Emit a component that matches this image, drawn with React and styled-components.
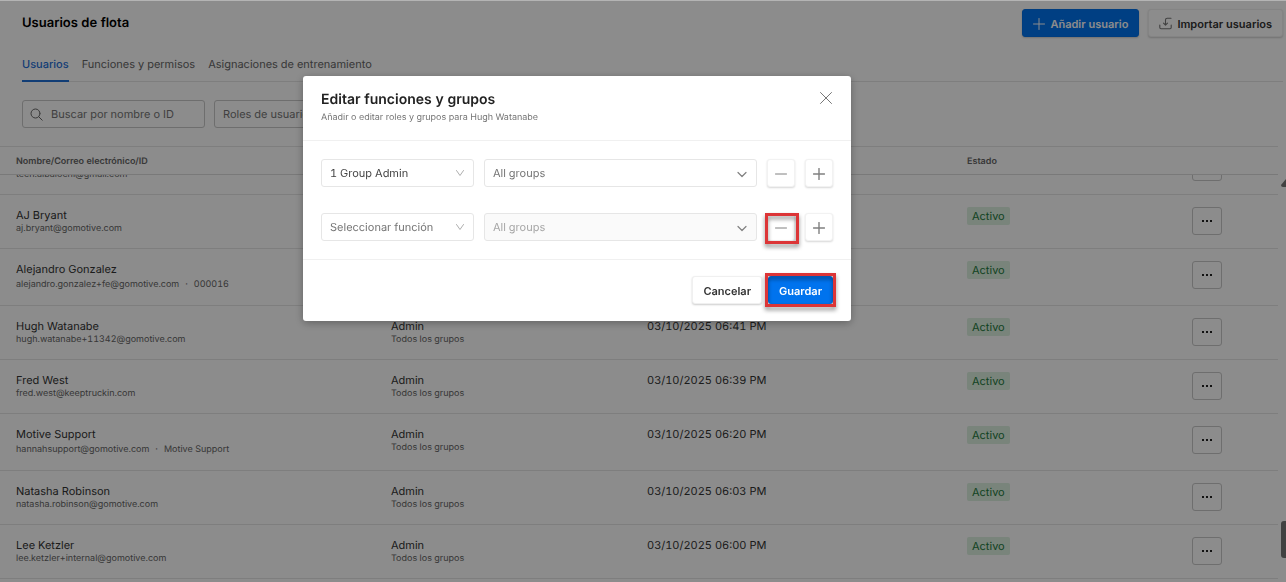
import React, { useLayoutEffect, useRef } from "react";
import styled, { createGlobalStyle, css } from "styled-components";

const GlobalStyle = createGlobalStyle`
  * {
    box-sizing: border-box;
  }

  body {
    margin: 0;
    background: #fff;
    color: #333;
    font-family: Inter, "Liberation Sans", sans-serif;
    font-size: 11px;
    font-variant-numeric: tabular-nums;
    text-rendering: geometricPrecision;
  }

  button,
  input,
  select {
    font-family: inherit;
    font-size: 11px;
    font-variant-numeric: inherit;
    text-rendering: inherit;
  }
`;

// Page
const Page = styled.div`
  display: flex;
  flex-direction: column;
  height: 100vh;
  overflow: hidden;
  border-top: 1px solid #b4b4b4;
`;

const Top = styled.header`
  display: flex;
  align-items: center;
  gap: 9px;
  padding: 8px 3px 0 22px;
`;

const PageTitle = styled.h1`
  flex: 1;
  margin: 0;
  color: #000;
  font-size: 13px;
  font-weight: 600;
`;

const Button = styled.button`
  display: inline-flex;
  align-items: center;
  justify-content: center;
  gap: 5px;
  height: 28px;
  padding: 1px 10px 0;
  border: 1px solid #f0f0f0;
  border-radius: 3px;
  background: #fff;
  color: #333;
  font-weight: 600;
  box-shadow: 0 1px 2px rgba(0, 0, 0, 0.2);
  cursor: pointer;

  ${({ $primary }) =>
    $primary &&
    css`
      border-color: #0070e8;
      background: #0073ee;
      color: #fff;
    `}
`;

const Tabs = styled.nav`
  display: flex;
  gap: 13px;
  margin: 16px 3px 0 22px;
  border-bottom: 1px solid #e6e6e6;
`;

const Tab = styled.a`
  margin-bottom: -1px;
  padding-bottom: 5px;
  border-bottom: 2px solid ${({ $active }) => ($active ? "#1f6fd6" : "transparent")};
  color: ${({ $active }) => ($active ? "#1f6fd6" : "#666")};
  font-weight: ${({ $active }) => ($active ? 500 : 400)};
  line-height: 22px;
  text-decoration: none;
`;

const Filters = styled.div`
  display: flex;
  gap: 9px;
  padding: 18px 22px;
`;

const SearchBox = styled.label`
  display: flex;
  align-items: center;
  gap: 8px;
  width: 183px;
  height: 28px;
  padding: 0 7px;
  border: 1px solid #c8c8c8;
  border-radius: 3px;
  color: #666;

  input {
    flex: 1;
    min-width: 0;
    padding: 0;
    border: 0;
    outline: 0;
    background: none;
  }

  input::placeholder {
    color: #757575;
  }
`;

// Users table
const TableArea = styled.div`
  display: flex;
  flex: 1;
  min-height: 0;
  margin-bottom: 3px;
`;

const TableScroll = styled.div`
  flex: 1;
  overflow: auto;
  border-top: 1px solid #e6e6e6;
  scrollbar-width: none;
`;

const Table = styled.table`
  width: 100%;
  border-spacing: 0;
  table-layout: fixed;
`;

const HeadCell = styled.th`
  position: sticky;
  top: 0;
  z-index: 1;
  width: ${({ $width }) => $width || "auto"};
  height: 28px;
  padding: 1px 0 0 16px;
  border-bottom: 1px solid #dcdcdc;
  background: #fff;
  color: #666;
  font-size: 9px;
  font-weight: 600;
  text-align: left;
`;

const Cell = styled.td`
  padding: 12px 0 13px 16px;
  border-bottom: 1px solid #e6e6e6;
  vertical-align: top;
`;

const Main = styled.div`
  min-height: 16px;
  color: #333;
  line-height: 16px;
`;

const Sub = styled.div`
  display: flex;
  gap: 6px;
  color: #666;
  font-size: 9px;
  line-height: ${({ $tall }) => ($tall ? 15 : 12)}px;
`;

const Status = styled.span`
  display: inline-block;
  padding: 0 5px;
  border-radius: 2px;
  background: #dcf0e0;
  color: #1e7a3c;
  line-height: 18px;
`;

const MoreButton = styled.button`
  display: flex;
  align-items: center;
  justify-content: center;
  width: 30px;
  height: 28px;
  padding: 0;
  border: 1px solid #c8c8c8;
  border-radius: 3px;
  background: #fff;
  color: #222;
`;

const ActionCell = styled(Cell)`
  padding-bottom: 0;
`;

const Rail = styled.div`
  display: flex;
  flex-direction: column;
  align-items: flex-end;
  justify-content: space-between;
  width: 8px;
  padding: 33px 0 21px;
`;

const Thumb = styled.div`
  width: 5px;
  height: 37px;
  border-radius: 3px 0 0 3px;
  background: #777;
`;

// Modal
const Overlay = styled.div`
  position: fixed;
  inset: 1px 0 0;
  z-index: 10;
  display: flex;
  align-items: flex-start;
  justify-content: center;
  padding: 75px 132px 0 0;
  background: rgba(0, 0, 0, 0.45);
`;

const Dialog = styled.section`
  width: 548px;
  max-width: 100%;
  border-radius: 3px;
  background: #fff;
  box-shadow: 0 2px 8px rgba(0, 0, 0, 0.3);
`;

const DialogHeader = styled.div`
  display: flex;
  align-items: flex-start;
  justify-content: space-between;
  padding: 14px 18px;
  border-bottom: 1px solid #f0f0f0;
`;

const DialogTitle = styled.h2`
  margin: 0;
  color: #222;
  font-size: 14px;
  font-weight: 600;
  line-height: 20px;
`;

const DialogText = styled.p`
  margin: 0;
  color: #757575;
  font-size: 9px;
  line-height: 16px;
`;

const CloseButton = styled.button`
  display: flex;
  padding: 1px 0;
  border: 0;
  background: none;
  color: #777;
`;

const DialogBody = styled.div`
  display: grid;
  gap: 26px;
  padding: 18px;
  border-bottom: 1px solid #f0f0f0;
`;

const RoleRow = styled.div`
  display: flex;
  gap: 10px;
`;

const SelectBox = styled.div`
  position: relative;
  flex: ${({ $width }) => ($width ? `0 0 ${$width}` : "1")};
  color: #999;

  select {
    width: 100%;
    height: 28px;
    padding: 0 24px 0 8px;
    appearance: none;
    border: 1px solid ${({ $strong }) => ($strong ? "#c8c8c8" : "#e6e6e6")};
    border-radius: 3px;
    background: #fff;
    color: ${({ $filled }) => ($filled ? "#444" : "#757575")};
    opacity: 1;
  }

  select:disabled {
    background: #fafafa;
    color: #a6a6a6;
  }

  svg {
    position: absolute;
    top: 9px;
    right: 9px;
    pointer-events: none;
  }
`;

const SquareButton = styled.button`
  display: flex;
  align-items: center;
  justify-content: center;
  width: 28px;
  height: 28px;
  padding: 1px 0 0;
  border: 1px solid #f2f2f2;
  border-radius: 3px;
  background: #fff;
  color: #808080;
  box-shadow: 0 1px 2px rgba(0, 0, 0, 0.16);
`;

const DialogFooter = styled.div`
  display: flex;
  justify-content: flex-end;
  gap: 6px;
  padding: 16px 18px 17px;
`;

const Marked = styled.div`
  position: relative;
  display: flex;

  ${({ $on }) =>
    $on &&
    css`
      &::after {
        content: "";
        position: absolute;
        inset: ${({ $inset }) => $inset};
        border: 3px solid #dc3537;
        filter: drop-shadow(0 3px 2px rgba(0, 0, 0, 0.45));
        pointer-events: none;
      }
    `}
`;

const Line = ({ size, d, width = 1, box = 12, color = "currentColor" }) => (
  <svg
    width={size}
    height={size}
    viewBox={`0 0 ${box} ${box}`}
    fill="none"
    stroke={color}
    strokeWidth={width}
    strokeLinecap="round"
    strokeLinejoin="round"
    aria-hidden="true"
  >
    <path d={d} />
  </svg>
);

const PlusIcon = ({ width }) => <Line size={12} width={width} d="M6 .5v11M.5 6h11" />;
const MinusIcon = () => <Line size={12} d="M.5 6h11" />;
const CloseIcon = () => <Line size={14} box={14} d="M1.5 1.5l11 11M12.5 1.5l-11 11" />;
const SearchIcon = () => <Line size={13} box={13} d="M10 5.5a4.5 4.5 0 1 1-9 0a4.5 4.5 0 0 1 9 0M8.8 8.8l3.4 3.4" />;
const ImportIcon = () => (
  <Line
    size={13}
    box={13}
    width={1.1}
    color="#777"
    d="M.8 8v2.6q0 1.2 1.2 1.2h9q1.2 0 1.2-1.2V8M12 1.2H8.2q-1.7 0-1.7 1.7v5M4.5 6.2l2 2 2-2"
  />
);
const ThinChevron = () => <Line size={10} box={10} width={0.8} d="M1.5 2.5L5 7.5l3.5-5" />;
const Chevron = () => <Line size={12} width={1.2} color="#808080" d="M2 4.5l4 4 4-4" />;

const users = [
  { email: "tech.albalochi@gmail.com" },
  { name: "AJ Bryant", email: "aj.bryant@gomotive.com", date: "03/10/2025 06:58 PM" },
  { name: "Alejandro Gonzalez", email: "alejandro.gonzalez+fe@gomotive.com", id: "000016", date: "03/10/2025 06:50 PM" },
  { name: "Hugh Watanabe", email: "hugh.watanabe+11342@gomotive.com", date: "03/10/2025 06:41 PM" },
  { name: "Fred West", email: "fred.west@keeptruckin.com", date: "03/10/2025 06:39 PM" },
  { name: "Motive Support", email: "hannahsupport@gomotive.com", id: "Motive Support", date: "03/10/2025 06:20 PM" },
  { name: "Natasha Robinson", email: "natasha.robinson@gomotive.com", date: "03/10/2025 06:03 PM" },
  { name: "Lee Ketzler", email: "lee.ketzler+internal@gomotive.com", date: "03/10/2025 06:00 PM" },
];

const UserRow = ({ user }) => (
  <tr>
    <Cell>
      <Main>{user.name}</Main>
      <Sub $tall={Boolean(user.id)}>
        <span>{user.email}</span>
        {user.id && (
          <>
            <span>·</span>
            <span>{user.id}</span>
          </>
        )}
      </Sub>
    </Cell>
    <Cell>
      {user.name && (
        <>
          <Main>Admin</Main>
          <Sub>Todos los grupos</Sub>
        </>
      )}
    </Cell>
    <Cell>
      <Main>{user.date}</Main>
    </Cell>
    <Cell>{user.name && <Status>Activo</Status>}</Cell>
    <ActionCell>
      <MoreButton type="button" aria-label={`Acciones para ${user.name || user.email}`}>
        <svg width="12" height="4" viewBox="0 0 12 4" fill="currentColor" aria-hidden="true">
          <rect x="1" y="1" width="2" height="2" />
          <rect x="5" y="1" width="2" height="2" />
          <rect x="9" y="1" width="2" height="2" />
        </svg>
      </MoreButton>
    </ActionCell>
  </tr>
);

const UsersTable = () => {
  const scroller = useRef(null);

  useLayoutEffect(() => {
    // Open the list a little past its first user
    scroller.current.scrollTop = 34;
  }, []);

  return (
    <TableArea>
      <TableScroll ref={scroller}>
        <Table>
          <thead>
            <tr>
              <HeadCell>Nombre/Correo electrónico/ID</HeadCell>
              <HeadCell $width="256px">Función</HeadCell>
              <HeadCell $width="320px">Última actividad</HeadCell>
              <HeadCell $width="225px">Estado</HeadCell>
              <HeadCell $width="102px" aria-label="Acciones" />
            </tr>
          </thead>
          <tbody>
            {users.map((user) => (
              <UserRow key={user.email} user={user} />
            ))}
          </tbody>
        </Table>
      </TableScroll>
      <Rail aria-hidden="true">
        <svg width="5" height="8" viewBox="0 0 5 8" fill="#777">
          <path d="M5 0L0 6q0 2 2 2h3z" />
        </svg>
        <Thumb />
      </Rail>
    </TableArea>
  );
};

const RoleFields = ({ role, disabled, marked }) => (
  <RoleRow>
    <SelectBox $width="153px" $filled={!disabled}>
      <select aria-label="Función">
        <option>{role}</option>
      </select>
      <ThinChevron />
    </SelectBox>
    <SelectBox>
      <select aria-label="Grupos" disabled={disabled}>
        <option>All groups</option>
      </select>
      <Chevron />
    </SelectBox>
    <Marked $on={marked} $inset="0 -4px -3px -2px">
      <SquareButton type="button" aria-label="Quitar función">
        <MinusIcon />
      </SquareButton>
    </Marked>
    <SquareButton type="button" aria-label="Añadir función">
      <PlusIcon width={1.4} />
    </SquareButton>
  </RoleRow>
);

const EditRolesModal = () => (
  <Overlay>
    <Dialog role="dialog" aria-modal="true" aria-labelledby="edit-roles-title">
      <DialogHeader>
        <div>
          <DialogTitle id="edit-roles-title">Editar funciones y grupos</DialogTitle>
          <DialogText>Añadir o editar roles y grupos para Hugh Watanabe</DialogText>
        </div>
        <CloseButton type="button" aria-label="Cerrar">
          <CloseIcon />
        </CloseButton>
      </DialogHeader>
      <DialogBody>
        <RoleFields role="1 Group Admin" />
        <RoleFields role="Seleccionar función" disabled marked />
      </DialogBody>
      <DialogFooter>
        <Button type="button">Cancelar</Button>
        <Marked $on $inset="-3px">
          <Button type="button" $primary>
            Guardar
          </Button>
        </Marked>
      </DialogFooter>
    </Dialog>
  </Overlay>
);

const App = () => (
  <>
    <GlobalStyle />
    <Page>
      <Top>
        <PageTitle>Usuarios de flota</PageTitle>
        <Button type="button" $primary>
          <PlusIcon />
          Añadir usuario
        </Button>
        <Button type="button">
          <ImportIcon />
          Importar usuarios
        </Button>
      </Top>
      <Tabs>
        <Tab href="#usuarios" $active>
          Usuarios
        </Tab>
        <Tab href="#funciones">Funciones y permisos</Tab>
        <Tab href="#entrenamiento">Asignaciones de entrenamiento</Tab>
      </Tabs>
      <Filters>
        <SearchBox>
          <SearchIcon />
          <input type="text" placeholder="Buscar por nombre o ID" aria-label="Buscar por nombre o ID" />
        </SearchBox>
        <SelectBox $width="153px" $strong>
          <select aria-label="Roles de usuario">
            <option>Roles de usuario</option>
          </select>
          <ThinChevron />
        </SelectBox>
      </Filters>
      <UsersTable />
    </Page>
    <EditRolesModal />
  </>
);

export default App;
